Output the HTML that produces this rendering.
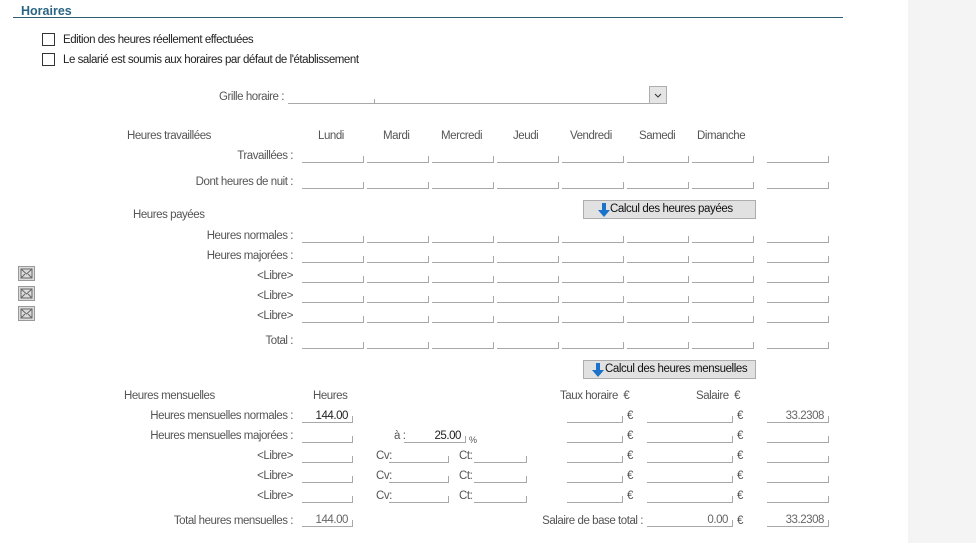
<!DOCTYPE html>
<html><head><meta charset="utf-8"><style>
*{margin:0;padding:0;box-sizing:border-box}
body{width:976px;height:543px;background:#fff;position:relative;overflow:hidden;font-family:"Liberation Sans",Arial,sans-serif;font-size:11.5px;color:#555;letter-spacing:-0.45px}
.side{position:absolute;left:908px;top:0;width:68px;height:543px;background:#f4f4f4}
.t{position:absolute;white-space:nowrap;line-height:14px;margin-top:1px}
.r{position:absolute;left:0;text-align:right;white-space:nowrap;line-height:14px;margin-top:1px}
.f{position:absolute;height:14px;border-bottom:1px solid #a8a8a8;text-align:right;padding-right:5px;line-height:14px;color:#222}
.f:after{content:"";position:absolute;right:0;bottom:0;width:1px;height:6px;background:#a8a8a8}
.g{color:#666}
.cb{position:absolute;width:13px;height:13px;border:1px solid #333;background:#fff}
.btn{position:absolute;left:583px;width:173px;height:19px;background:#e1e1e1;border:1px solid #adadad;color:#111;line-height:17px;padding-left:26px;white-space:nowrap;font-size:11.5px;letter-spacing:-0.4px}
.btn svg{position:absolute;left:14px;top:2px}
.env{position:absolute;left:18px;width:17px;height:15px;background:#dcdcdc;border:1px solid #999}
</style></head><body>
<div class="side"></div>
<div class="t" style="left:21px;top:3px;font-weight:bold;color:#2b6584;font-size:12.5px;letter-spacing:0">Horaires</div>
<div style="position:absolute;left:13px;top:17px;width:830px;height:1px;background:#2b5d72"></div>

<div class="cb" style="left:42px;top:33px"></div>
<div class="t" style="left:63px;top:32px;color:#222">Edition des heures réellement effectuées</div>
<div class="cb" style="left:42px;top:53px"></div>
<div class="t" style="left:63px;top:52px;color:#222">Le salarié est soumis aux horaires par défaut de l'établissement</div>

<div class="r" style="width:284px;top:89px">Grille horaire :</div>
<div style="position:absolute;left:288px;top:103px;width:362px;height:1px;background:#a8a8a8"></div>
<div style="position:absolute;left:374px;top:99px;width:1px;height:4px;background:#a8a8a8"></div>
<div style="position:absolute;left:649px;top:86px;width:18px;height:18px;border:1px solid #adadad;background:#e5e5e5"><svg width="16" height="16" viewBox="0 0 16 16"><path d="M5 7l3 3 3-3" fill="none" stroke="#333" stroke-width="1"/></svg></div>

<div class="t" style="left:127px;top:128px">Heures travaillées</div>
<div class="t" style="left:318px;top:128px">Lundi</div>
<div class="t" style="left:383px;top:128px">Mardi</div>
<div class="t" style="left:441px;top:128px">Mercredi</div>
<div class="t" style="left:513px;top:128px">Jeudi</div>
<div class="t" style="left:570px;top:128px">Vendredi</div>
<div class="t" style="left:639px;top:128px">Samedi</div>
<div class="t" style="left:697px;top:128px">Dimanche</div>

<div class="r" style="width:293px;top:148px">Travaillées :</div>
<div class="r" style="width:293px;top:174px">Dont heures de nuit :</div>
<div class="t" style="left:133px;top:207px">Heures payées</div>
<div class="r" style="width:293px;top:228px">Heures normales :</div>
<div class="r" style="width:293px;top:248px">Heures majorées :</div>
<div class="r" style="width:293px;top:268px">&lt;Libre&gt;</div>
<div class="r" style="width:293px;top:288px">&lt;Libre&gt;</div>
<div class="r" style="width:293px;top:308px">&lt;Libre&gt;</div>
<div class="r" style="width:293px;top:333px">Total :</div>

<div class="env" style="top:266px"><svg width="15" height="13" viewBox="0 0 15 13"><rect x="2" y="2" width="11" height="9" fill="none" stroke="#666"/><path d="M2 2l5.5 5 5.5-5" stroke="#666" fill="none"/><path d="M2 11l4-4M13 11l-4-4" stroke="#666" fill="none"/></svg></div>
<div class="env" style="top:286px"><svg width="15" height="13" viewBox="0 0 15 13"><rect x="2" y="2" width="11" height="9" fill="none" stroke="#666"/><path d="M2 2l5.5 5 5.5-5" stroke="#666" fill="none"/><path d="M2 11l4-4M13 11l-4-4" stroke="#666" fill="none"/></svg></div>
<div class="env" style="top:306px"><svg width="15" height="13" viewBox="0 0 15 13"><rect x="2" y="2" width="11" height="9" fill="none" stroke="#666"/><path d="M2 2l5.5 5 5.5-5" stroke="#666" fill="none"/><path d="M2 11l4-4M13 11l-4-4" stroke="#666" fill="none"/></svg></div>

<div id="grid"></div>

<div class="btn" style="top:200px"><svg width="12" height="14" viewBox="0 0 12 14"><path d="M4 0h4v7h4L6 14 0 7h4z" fill="#1a73c8"/></svg>Calcul des heures payées</div>
<div class="btn" style="top:360px;padding-left:21px"><svg width="12" height="14" viewBox="0 0 12 14" style="left:8px"><path d="M4 0h4v7h4L6 14 0 7h4z" fill="#1a73c8"/></svg>Calcul des heures mensuelles</div>

<div class="t" style="left:124px;top:388px">Heures mensuelles</div>
<div class="t" style="left:313px;top:388px">Heures</div>
<div class="t" style="left:560px;top:388px">Taux horaire &nbsp;€</div>
<div class="t" style="left:696px;top:388px">Salaire &nbsp;€</div>

<div class="r" style="width:293px;top:408px">Heures mensuelles normales :</div>
<div class="r" style="width:293px;top:428px">Heures mensuelles majorées :</div>
<div class="r" style="width:293px;top:448px">&lt;Libre&gt;</div>
<div class="r" style="width:293px;top:468px">&lt;Libre&gt;</div>
<div class="r" style="width:293px;top:488px">&lt;Libre&gt;</div>
<div class="r" style="width:293px;top:513px">Total heures mensuelles :</div>

<div class="f" style="left:302px;top:409px;width:51px">144.00</div>
<div class="f" style="left:302px;top:429px;width:51px"></div>
<div class="f" style="left:302px;top:449px;width:51px"></div>
<div class="f" style="left:302px;top:469px;width:51px"></div>
<div class="f" style="left:302px;top:489px;width:51px"></div>
<div class="f g" style="left:302px;top:513px;width:51px">144.00</div>

<div class="t" style="left:394px;top:428px">à :</div>
<div class="f" style="left:404px;top:429px;width:62px">25.00</div>
<div class="t" style="left:469px;top:432px;font-size:9px">%</div>

<div class="t" style="left:376px;top:448px">Cv:</div><div class="f" style="left:389px;top:449px;width:60px"></div>
<div class="t" style="left:459px;top:448px">Ct:</div><div class="f" style="left:474px;top:449px;width:53px"></div>
<div class="t" style="left:376px;top:468px">Cv:</div><div class="f" style="left:389px;top:469px;width:60px"></div>
<div class="t" style="left:459px;top:468px">Ct:</div><div class="f" style="left:474px;top:469px;width:53px"></div>
<div class="t" style="left:376px;top:488px">Cv:</div><div class="f" style="left:389px;top:489px;width:60px"></div>
<div class="t" style="left:459px;top:488px">Ct:</div><div class="f" style="left:474px;top:489px;width:53px"></div>

<div id="money"></div>
<div class="r" style="width:643px;top:513px">Salaire de base total :</div>
<div class="f g" style="left:647px;top:513px;width:86px">0.00</div>
<div class="t" style="left:737px;top:513px">€</div>
<div class="f g" style="left:767px;top:513px;width:62px">33.2308</div>

<script>
var g='',cols=[302,367,432,497,562,627,692,767],rows=[149,175,229,249,269,289,309,335];
rows.forEach(function(y){cols.forEach(function(x){g+='<div class="f" style="left:'+x+'px;top:'+y+'px;width:62px"></div>';});});
document.getElementById('grid').outerHTML=g;
var m='';[409,429,449,469,489].forEach(function(y,i){
m+='<div class="f" style="left:567px;top:'+y+'px;width:56px"></div><div class="t" style="left:627px;top:'+(y-1)+'px">€</div>';
m+='<div class="f" style="left:647px;top:'+y+'px;width:86px"></div><div class="t" style="left:737px;top:'+(y-1)+'px">€</div>';
m+='<div class="f g" style="left:767px;top:'+y+'px;width:62px">'+(i==0?'33.2308':'')+'</div>';});
document.getElementById('money').outerHTML=m;
</script>
</body></html>
